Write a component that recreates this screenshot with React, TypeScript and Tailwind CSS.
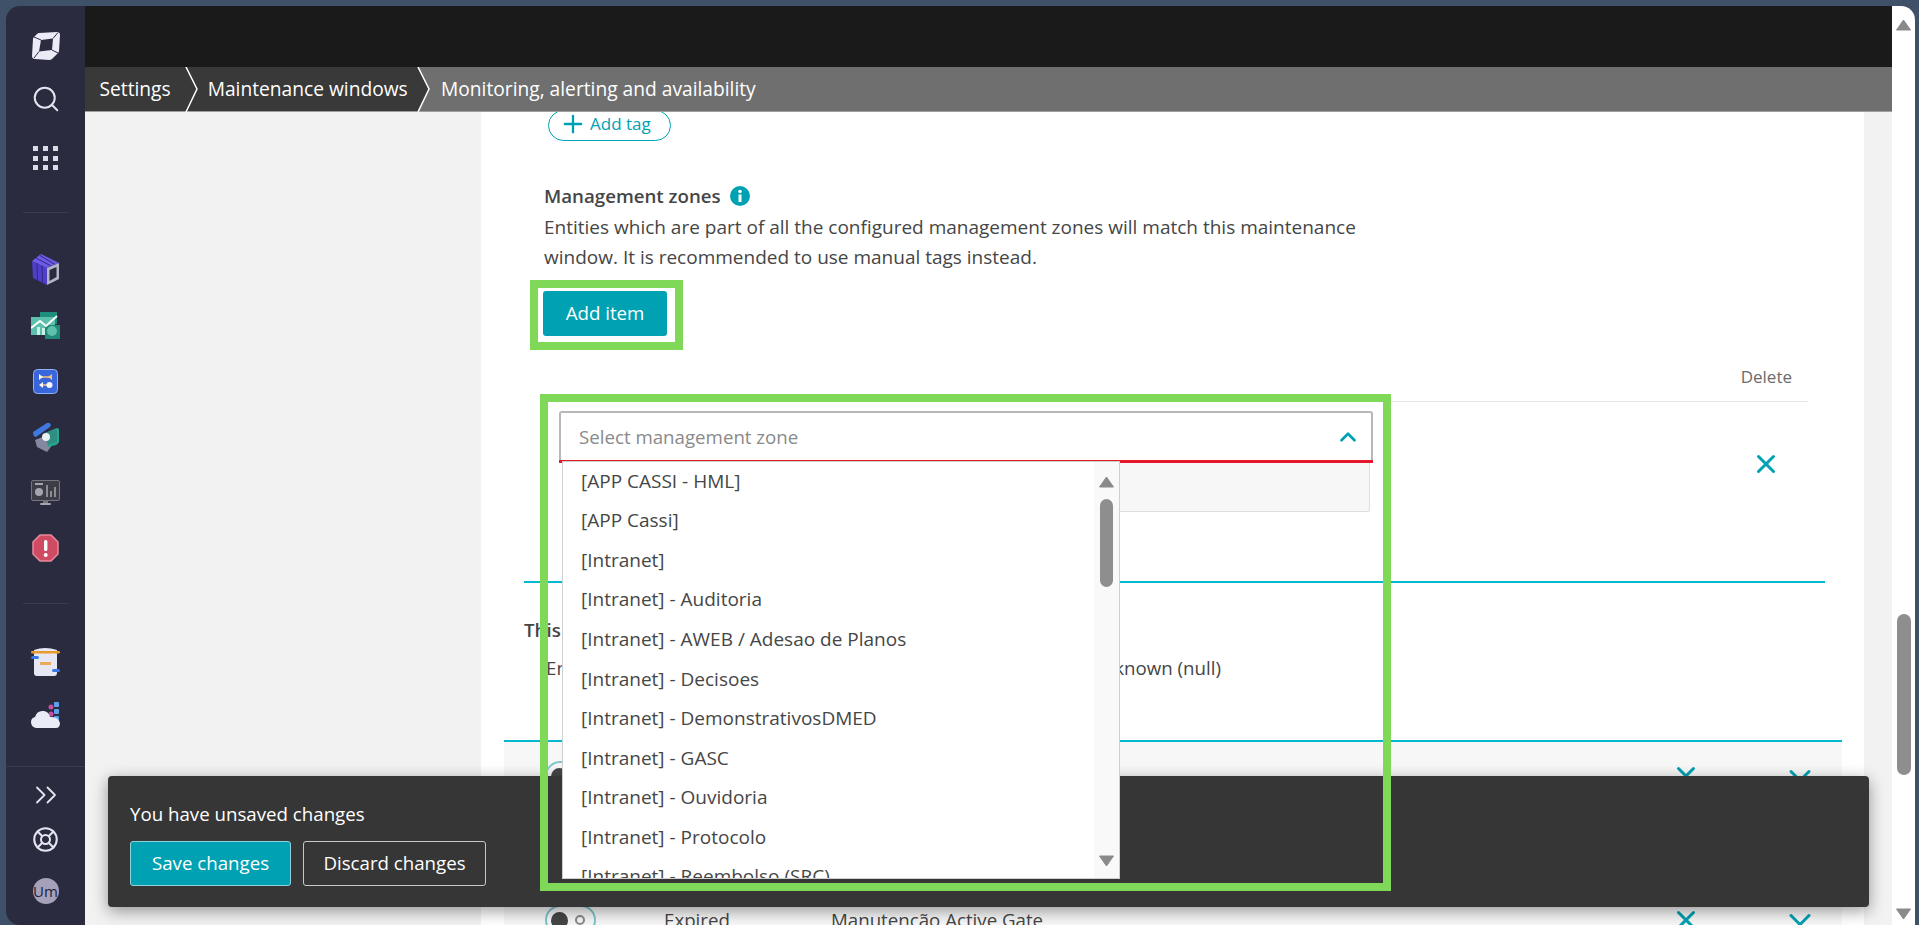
import React from 'react';
import { ChevronDown, ChevronUp, ChevronsRight, LifeBuoy, Plus, Search, X } from 'lucide-react';

const zones = [
  '[APP CASSI - HML]',
  '[APP Cassi]',
  '[Intranet]',
  '[Intranet] - Auditoria',
  '[Intranet] - AWEB / Adesao de Planos',
  '[Intranet] - Decisoes',
  '[Intranet] - DemonstrativosDMED',
  '[Intranet] - GASC',
  '[Intranet] - Ouvidoria',
  '[Intranet] - Protocolo',
  '[Intranet] - Reembolso (SRC)',
];

const rows = ['Manutenção Gateway', 'Manutenção Servidores', 'Manutenção Active Gate'];

const Divider = ({ className }: { className: string }) => (
  <div className={`h-px bg-[#3a3b50] ${className}`}></div>
);

const LogoIcon = () => (
  <svg viewBox="0 0 28 28" className="mt-[26px] mx-auto w-[28px] h-[28px]">
    <path d="M7 1 L25 0 Q28 0 28 3 L27 19 Q27 20 26 21 L20 27 Q19 28 17 28 L3 27 Q0 27 0 24 L1 7 Q1 6 2 5 L5 2 Q6 1 7 1Z" fill="#ebebf7" />
    <path d="M9 8 L21 6.5 L20 18 L7 19.5Z" fill="#2a2b3e" />
    <path d="M7 19.5 L2 26 M20 18 L26 21 M9 8 L2 5 M21 6.5 L26 0.5" stroke="#2a2b3e" strokeWidth="1" />
  </svg>
);

const CubeIcon = () => (
  <svg viewBox="0 0 27 31" className="mt-[41px] mx-auto w-[27px] h-[31px]">
    <path d="M0 7 L15 14 L15 31 L1 24Z" fill="#4d3fc9" />
    <path d="M0 7 L9 0 L27 9 L15 14Z" fill="#6f5ae8" />
    <path d="M4 4 L19 12 M8 1.5 L23 10.5 M5 9 L5.5 26 M10 11.5 L10.5 28.5" stroke="#2f2a80" strokeWidth="1" fill="none" />
    <path d="M15 14 L27 9 L27 25 L15 31Z" fill="#b4b4c8" />
    <path d="M17.5 16 L24.5 13 L24.5 23 L17.5 27Z" fill="#2a2b3e" />
  </svg>
);

const GreenIcon = () => (
  <svg viewBox="0 0 29 27" className="mt-[27px] mx-auto w-[29px] h-[27px]">
    <rect x="9" y="0" width="17" height="12" fill="#1e8f7d" />
    <rect x="0" y="5" width="24" height="18" fill="#5cc0ac" />
    <rect x="14" y="13" width="15" height="14" fill="#1f8a78" />
    <circle cx="21" cy="19" r="5" fill="#5fc0ac" />
    <rect x="6" y="15" width="3" height="8" fill="#c9efe6" />
    <rect x="11" y="16" width="3" height="7" fill="#c9efe6" />
    <path d="M0 16 L9 9 L15 14 L26 4" fill="none" stroke="#ffffff" strokeWidth="2" />
  </svg>
);

const BlueIcon = () => (
  <svg viewBox="0 0 25 25" className="mt-[30px] mx-auto w-[25px] h-[25px]">
    <rect x="0.5" y="0.5" width="24" height="24" rx="4" fill="#3a66dc" stroke="#8fb2f2" />
    <path d="M7 8 H18 M18 16 H7" stroke="#f3c37a" strokeWidth="1.5" />
    <path d="M6 5 L10 8 L6 11Z" fill="#f6f6f6" />
    <path d="M19 5 L15 8 L19 11Z" fill="#f3c37a" />
    <path d="M10 13 L6 16 L10 19Z" fill="#f6f6f6" />
    <circle cx="16.5" cy="16" r="3" fill="#f6f6f6" />
  </svg>
);

const MultiIcon = () => (
  <svg viewBox="0 0 26 30" className="mt-[28px] mx-auto w-[26px] h-[30px]">
    <path d="M2 18 L12 14 L20 22 L14 30 L4 25Z" fill="#8488a0" />
    <path d="M0 10 L14 1 Q17 0 18 3 L17 5 L3 15 Q0 15 0 10Z" fill="#3f78e0" />
    <path d="M12 11 L24 6 Q26 6 26 8 L26 20 Q25 22 23 23 L15 25Z" fill="#27a78f" />
    <path d="M12 11 L24 6 L24 20 L15 23Z" fill="#2f8f80" />
    <circle cx="13" cy="15" r="4" fill="#e8f2f0" />
  </svg>
);

const MonitorIcon = () => (
  <svg viewBox="0 0 29 26" className="mt-[28px] mx-auto w-[29px] h-[26px]">
    <rect x="0.5" y="0.5" width="28" height="20" rx="1.5" fill="#3c3d46" stroke="#75767e" />
    <rect x="4" y="3" width="8" height="2" fill="#a5a6ac" />
    <circle cx="8" cy="12" r="4" fill="#a5a6ac" />
    <rect x="15" y="5" width="2" height="12" fill="#8c8d94" />
    <rect x="19" y="11" width="2" height="6" fill="#8c8d94" />
    <rect x="23" y="7" width="2" height="10" fill="#8c8d94" />
    <rect x="12" y="21" width="5" height="2" fill="#75767e" />
    <rect x="9" y="23" width="11" height="2" rx="1" fill="#a5a6ac" />
  </svg>
);

const AlertIcon = () => (
  <svg viewBox="0 0 27 28" className="mt-[28px] mx-auto w-[27px] h-[28px]">
    <path d="M8 1 H19 L26 8 V20 L19 27 H8 L1 20 V8Z" fill="#cf4a63" stroke="#e88a9b" strokeWidth="1.5" />
    <rect x="12" y="6" width="3.4" height="11" rx="1.5" fill="#ffffff" />
    <circle cx="13.7" cy="21" r="2" fill="#ffffff" />
  </svg>
);

const TrayIcon = () => (
  <svg viewBox="0 0 29 30" className="mt-[43px] mx-auto w-[29px] h-[30px]">
    <path d="M3 3 Q14 -1 26 3 L26 26 Q26 29 23 29 L6 29 Q3 29 3 26Z" fill="#e6e7f4" />
    <rect x="0" y="4" width="29" height="2.5" rx="1" fill="#eb9a2c" />
    <rect x="9" y="15" width="11" height="3" fill="#eba95a" />
    <rect x="0" y="9" width="8" height="3" rx="1.5" fill="#3a78e6" />
    <rect x="21" y="22" width="8" height="3" rx="1.5" fill="#3a78e6" />
  </svg>
);

const CloudIcon = () => (
  <svg viewBox="0 0 29 27" className="mt-[25px] mx-auto w-[29px] h-[27px]">
    <rect x="23" y="0" width="5" height="5" rx="1" fill="#5da2ee" />
    <rect x="23" y="7" width="5" height="5" rx="1" fill="#5da2ee" />
    <rect x="23" y="14" width="5" height="5" rx="1" fill="#5da2ee" />
    <circle cx="20" cy="5" r="2.5" fill="#c94fa0" />
    <circle cx="20" cy="12" r="2.5" fill="#c94fa0" />
    <path d="M5 26 Q0 25 0 20 Q0 16 4 15 Q6 8 13 9 Q18 10 19 15 Q27 14 29 21 Q29 26 25 26Z" fill="#e9ebf6" />
  </svg>
);

const Sidebar = () => (
  <aside className="w-[79px] h-[919px] shrink-0 bg-[#2a2b3e] rounded-l-[14px] flex flex-col">
    <LogoIcon />
    <Search className="mt-[24px] mx-auto w-[30px] h-[30px] text-[#e4e4f0]" strokeWidth={1.6} />
    <div className="mt-[32px] mx-auto grid grid-cols-3 gap-x-[5px] gap-y-[4.5px] w-[25px]">
      {Array.from({ length: 9 }).map((_, i) => (
        <div key={i} className="w-[5px] h-[5px] bg-[#dcdce8]"></div>
      ))}
    </div>
    <Divider className="mt-[42px] mx-[17px]" />
    <CubeIcon />
    <GreenIcon />
    <BlueIcon />
    <MultiIcon />
    <MonitorIcon />
    <AlertIcon />
    <Divider className="mt-[41px] mx-[17px]" />
    <TrayIcon />
    <CloudIcon />
    <Divider className="mt-[37px]" />
    <ChevronsRight className="mt-[10px] mx-auto w-[36px] h-[36px] text-[#e4e4f0]" strokeWidth={1.2} />
    <LifeBuoy className="mt-[13px] mx-auto w-[27px] h-[27px] text-[#e4e4f0]" strokeWidth={1.8} />
    <div className="mt-[25px] mx-auto w-[26px] h-[26px] rounded-full bg-[#a5a1ba] flex items-center justify-center text-[15px] text-[#22233a] leading-none">
      Um
    </div>
  </aside>
);

const Breadcrumb = () => (
  <div className="h-[45px] shrink-0 flex bg-[#6f6f6f] text-white text-[19.2px] border-b border-[#a0a0a0]">
    <div className="relative w-[333px] shrink-0 bg-[#393939] flex items-center pl-[14.5px]">
      <span>Settings</span>
      <span className="ml-[37px] whitespace-nowrap">Maintenance windows</span>
      <svg viewBox="0 0 14 45" className="absolute left-[100px] top-0 w-[14px] h-[45px]">
        <path d="M1 0 L12 22 L1 45" fill="none" stroke="#ffffff" strokeWidth="1.5" />
      </svg>
      <svg viewBox="0 0 14 45" className="absolute left-[332px] top-0 w-[14px] h-[45px]">
        <path d="M0 0 L12 22 L0 45 Z" fill="#393939" />
        <path d="M1 0 L12 22 L1 45" fill="none" stroke="#ffffff" strokeWidth="1.5" />
      </svg>
    </div>
    <div className="flex items-center pl-[23px]">Monitoring, alerting and availability</div>
  </div>
);

const ConfigRow = ({ name }: { name: string }) => (
  <div className="relative h-[72px] flex items-center shrink-0">
    <div className="ml-[41px] w-[51px] h-[30px] rounded-full border-2 border-[#7cc6cf] flex items-center pl-[4px] gap-[7px]">
      <div className="w-[17px] h-[17px] rounded-full bg-[#454646]"></div>
      <div className="w-[10px] h-[10px] rounded-full border-2 border-[#8a8a8a]"></div>
    </div>
    <span className="ml-[68px] w-[167px]">Expired</span>
    <span>{name}</span>
    <X className="absolute left-[1167px] w-[30px] h-[30px] text-[#00a1b2]" strokeWidth={2.4} />
    <ChevronDown className="absolute left-[1278px] w-[36px] h-[36px] text-[#00a1b2]" strokeWidth={2} />
  </div>
);

const Panel = () => (
  <section className="relative w-[1383px] shrink-0 bg-white text-[#454646] text-[18.7px] overflow-hidden">
    <button className="ml-[67px] -mt-[2px] w-[123px] h-[31px] rounded-full border border-[#00a1b2] flex items-center pl-[10px] pb-[4px] gap-[3px] text-[#00a1b2] text-[17px]">
      <Plus className="w-[28px] h-[28px]" strokeWidth={2} />
      Add tag
    </button>
    <div className="ml-[63px] mt-[43px] h-[24px] flex items-center gap-[9px] font-semibold leading-6">
      <span>Management zones</span>
      <svg viewBox="0 0 20 20" className="w-[20px] h-[20px]">
        <circle cx="10" cy="10" r="10" fill="#00a1b2" />
        <rect x="8.5" y="8.5" width="3" height="7.5" fill="#fff" />
        <circle cx="10" cy="5.5" r="1.8" fill="#fff" />
      </svg>
    </div>
    <p className="ml-[63px] mt-[4px] w-[830px] leading-[30px] text-[19px]">
      Entities which are part of all the configured management zones will match this maintenance window. It is recommended to use manual tags instead.
    </p>
    <button className="ml-[62px] mt-[19px] w-[124px] h-[45px] rounded-[3px] bg-[#00a1b2] text-white font-medium block">
      Add item
    </button>

    <div className="ml-[63px] mt-[26px] w-[1264px] h-[40px] border-b border-[#e6e6e6] text-[17px] flex justify-end items-center pr-[16px] pb-[10px] text-[#6b6b6b]">
      Delete
    </div>
    <div className="flex ml-[78px] mt-[9px]">
      <div className="w-[814px]">
        <div className="h-[52px] border-2 border-b-0 border-[#b8b8b8] rounded-t-[3px] flex items-center justify-between pl-[18px] pr-[10px] pb-[2px] text-[#8a8a8a] relative">
          <span>Select management zone</span>
          <ChevronUp className="w-[26px] h-[26px] text-[#00a1b2]" strokeWidth={2.5} />
          <div className="absolute left-[-2px] right-[-2px] bottom-0 h-[3px] bg-[#e4172b]"></div>
        </div>
        <div className="ml-[3px] mr-[3px] h-[49px] bg-[#f7f7f7] border border-t-0 border-[#dedede] rounded-b-[3px]"></div>
      </div>
      <X className="ml-[378px] mt-[38px] w-[30px] h-[30px] text-[#00a1b2]" strokeWidth={2.4} />
    </div>

    <div className="ml-[43px] mt-[69px] w-[1301px] h-[2px] bg-[#00b9cc]"></div>
    <div className="ml-[43px] mt-[35px] font-semibold leading-6 whitespace-nowrap">This maintenance window applies to</div>
    <div className="ml-[65px] mt-[14px] w-[675px] leading-6 flex justify-between">
      <span>Entities</span>
      <span>known (null)</span>
    </div>
    <div className="ml-[23px] mt-[60px] w-[1338px] h-[2px] bg-[#00b9cc]"></div>
    <div className="ml-[23px] w-[1338px] h-[200px] bg-[#f7f7f7] flex flex-col">
      <div className="-mt-[2px]">
        {rows.map((name) => (
          <ConfigRow key={name} name={name} />
        ))}
      </div>
    </div>
  </section>
);

const PageScrollbar = () => (
  <div className="relative w-[23px] shrink-0 bg-white rounded-tr-[14px] flex flex-col items-center">
    <svg viewBox="0 0 15 12" className="mt-[13px] w-[15px] h-[12px]">
      <path d="M7.5 1 L14.5 11 H0.5Z" fill="#8a8a8a" stroke="#8a8a8a" strokeLinejoin="round" />
    </svg>
    <div className="mt-[583px] w-[14px] h-[161px] rounded-full bg-[#8e8e8e]"></div>
    <svg viewBox="0 0 15 12" className="mt-[133px] w-[15px] h-[12px]">
      <path d="M7.5 11 L14.5 1 H0.5Z" fill="#8a8a8a" stroke="#8a8a8a" strokeLinejoin="round" />
    </svg>
  </div>
);

const ZoneDropdown = () => (
  <div className="absolute left-[562px] top-[461px] w-[558px] h-[418px] bg-white border border-[#cfcfcf] z-30 flex overflow-hidden text-[19px] text-[#454646]">
    <ul className="flex-1 min-w-0 pl-[18px] -mt-[1px]">
      {zones.map((zone) => (
        <li key={zone} className="h-[39.6px] flex items-center whitespace-nowrap">
          {zone}
        </li>
      ))}
    </ul>
    <div className="w-[25px] shrink-0 bg-[#f9f9f9] flex flex-col items-center">
      <svg viewBox="0 0 15 12" className="mt-[14px] w-[15px] h-[12px]">
        <path d="M7.5 1 L14.5 11 H0.5Z" fill="#8a8a8a" stroke="#8a8a8a" strokeLinejoin="round" />
      </svg>
      <div className="mt-[11px] w-[13px] h-[88px] rounded-full bg-[#8e8e8e]"></div>
      <svg viewBox="0 0 15 12" className="mt-[268px] w-[15px] h-[12px]">
        <path d="M7.5 11 L14.5 1 H0.5Z" fill="#8a8a8a" stroke="#8a8a8a" strokeLinejoin="round" />
      </svg>
    </div>
  </div>
);

const UnsavedToast = () => (
  <div className="absolute left-[108px] top-[776px] w-[1761px] h-[131px] bg-[#363636] rounded-[4px] shadow-[0_4px_16px_rgba(0,0,0,0.4)] z-10 text-white text-[18.7px] pl-[22px]">
    <div className="mt-[26px] leading-6">You have unsaved changes</div>
    <div className="mt-[15px] flex gap-[12px]">
      <button className="w-[161px] h-[45px] rounded-[3px] bg-[#00a1b2] border border-[#8fd3db]">Save changes</button>
      <button className="w-[183px] h-[45px] rounded-[3px] border border-[#c8c8c8]">Discard changes</button>
    </div>
  </div>
);

export default function App() {
  return (
    <div
      className="relative w-full h-[925px] overflow-hidden bg-[#3f5169] pt-[6px] pl-[6px] pr-[4px] flex"
      style={{ fontFamily: '"Open Sans", "Liberation Sans", sans-serif' }}
    >
      <Sidebar />
      <main className="flex-1 min-w-0 flex flex-col">
        <div className="h-[61px] shrink-0 bg-[#1a1a1a]"></div>
        <Breadcrumb />
        <div className="flex-1 min-h-0 flex bg-[#f2f2f2] pl-[396px]">
          <Panel />
        </div>
      </main>
      <PageScrollbar />

      <UnsavedToast />
      <ZoneDropdown />

      {/* caixas verdes da anotação */}
      <div className="absolute left-[530px] top-[280px] w-[153px] h-[70px] border-[8px] border-[#7fd857] z-40 pointer-events-none"></div>
      <div className="absolute left-[540px] top-[394px] w-[851px] h-[497px] border-[8px] border-[#7fd857] z-40 pointer-events-none"></div>
    </div>
  );
}
